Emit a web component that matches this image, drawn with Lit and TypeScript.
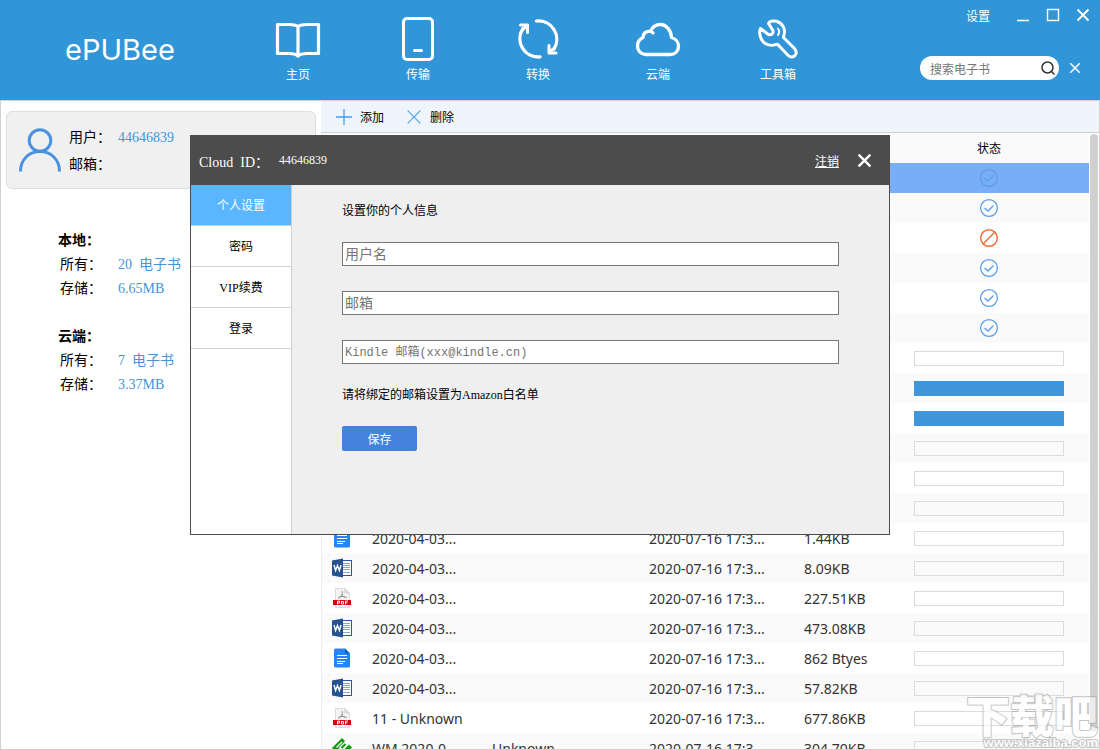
import { LitElement, html, css, svg, nothing } from "lit";
import { customElement, property, state } from "lit/decorators.js";
import { classMap } from "lit/directives/class-map.js";

type FileKind = "doc" | "word" | "pdf" | "green" | "";
type Status = "done" | "blocked" | "empty" | "full";

interface Row {
  kind: FileKind;
  name: string;
  author?: string;
  date: string;
  size: string;
  status: Status;
}

const blank = (status: Status): Row => ({ kind: "", name: "", date: "", size: "", status });
const book = (kind: FileKind, name: string, size: string, author = ""): Row => ({
  kind,
  name,
  author,
  date: "2020-07-16 17:3...",
  size,
  status: "empty",
});

const ROWS: Row[] = [
  blank("done"),
  blank("done"),
  blank("blocked"),
  blank("done"),
  blank("done"),
  blank("done"),
  blank("empty"),
  blank("full"),
  blank("full"),
  blank("empty"),
  blank("empty"),
  blank("empty"),
  book("doc", "2020-04-03...", "1.44KB"),
  book("word", "2020-04-03...", "8.09KB"),
  book("pdf", "2020-04-03...", "227.51KB"),
  book("word", "2020-04-03...", "473.08KB"),
  book("doc", "2020-04-03...", "862 Btyes"),
  book("word", "2020-04-03...", "57.82KB"),
  book("pdf", "11 - Unknown", "677.86KB"),
  book("green", "WM 2020-0...", "304.70KB", "Unknown"),
];

const NAV_ICONS = {
  home: svg`<path d="M23 9.500C20 7.500 17 7.500 14 7.500H2.500V36.500H14C18 36.500 21 37 23 39C25 37 28 36.500 32 36.500H43.500V7.500H32C29 7.500 26 7.500 23 9.500V38" stroke-width="3.200"/>`,
  transfer: svg`<rect x="8.500" y="1.500" width="29" height="41" rx="3.500" stroke-width="3"/><path d="M19.500 33.500h7" stroke-width="3"/>`,
  convert: svg`<path d="M21.500 4.100A18.300 18.300 0 0 1 39 32M25 39.900A18.300 18.300 0 0 1 8 11.500" stroke-width="3.300"/><path d="M5.500 8H12.500V15.500M41 36H34V28.500M34 36L38 32M12.500 8L8.500 12" stroke-width="3"/>`,
  cloud: svg`<path d="M10.500 37.500H35.500C40.500 37.500 43.500 33.500 43.500 29.500C43.500 25 40.500 21.500 36.500 20.500C36 13 31 7.500 25.500 7.500C21 7.500 17.500 9.500 15.500 14.500C11 13.500 8 16.500 8 20.500C4.500 22 2.500 25.500 2.500 29C2.500 33.500 6 37.500 10.500 37.500ZM15.500 14.500C16.500 14.700 17.300 15.100 18 15.800" stroke-width="3.300"/>`,
  tools: svg`<path d="M5.500 11.500L13.500 17.500C16.500 18.500 18.800 16.200 17.800 13.200L13.500 6.500C14 4.500 18 3.300 21.500 4.300C27.500 6 31 12 28.800 18.500L28.500 20.500L39.500 31.500C42 34.500 41.500 37.500 39.500 39C37.500 40.500 35 40.200 33 38.200L22.500 27.200C15.500 29.700 9.500 27.500 6.500 22.500C4.500 19 4.200 14 5.500 11.500Z" stroke-width="3"/><path d="M23 11.500C24.500 13.500 24.500 16 23 18" stroke-width="2"/>`,
};

const NAV: { id: keyof typeof NAV_ICONS; label: string }[] = [
  { id: "home", label: "主页" },
  { id: "transfer", label: "传输" },
  { id: "convert", label: "转换" },
  { id: "cloud", label: "云端" },
  { id: "tools", label: "工具箱" },
];

const FILE_ICONS = {
  doc: html`<svg width="20" height="20" viewBox="0 0 20 20" aria-hidden="true">
    <path d="M3.500 0.500H13L18 5.500V18a1.500 1.500 0 0 1-1.500 1.500h-13A1.500 1.500 0 0 1 2 18V2A1.500 1.500 0 0 1 3.500 .5Z" fill="#2484fc"/>
    <path d="M13 .5L18 5.500H13Z" fill="#0d5fc4"/>
    <path d="M5 7.500h10M5 10.500h10M5 13.500h8M5 15.500h6" stroke="#fff" stroke-width="1.200"/>
  </svg>`,
  word: html`<svg width="20" height="20" viewBox="0 0 20 20" aria-hidden="true">
    <rect x="9" y="2.500" width="10.500" height="15" fill="#fff" stroke="#2b579a"/>
    <path d="M11 5.500h7M11 7.500h7M11 9.500h7M11 11.500h7M11 14.500h7" stroke="#8ba5cb"/>
    <path d="M0 2.500L11 .5V19.500L0 17.500Z" fill="#26528f"/>
    <path d="M2 7L3.600 12.500L5.500 7.500L7.400 12.500L9 7" fill="none" stroke="#fff" stroke-width="1.400"/>
  </svg>`,
  pdf: html`<svg width="20" height="20" viewBox="0 0 20 20" aria-hidden="true">
    <path d="M3.500 .5H13L17.500 5V19.500H3.500Z" fill="#f4f4f4" stroke="#dcdcdc"/>
    <path d="M13 .5V5H17.500" fill="#ddd" stroke="#cfcfcf"/>
    <path d="M10.200 3C11 6 9 8.500 6 10.300M10 6.500C11 8.500 12.500 9.500 15 9.500M7 9.300C9 8.500 11 8.300 13 8.600" fill="none" stroke="#888" stroke-width=".9"/>
    <rect x="1" y="12" width="18" height="5" fill="#cc0a0a"/>
    <path d="M5.500 16.500V13H7.500V15H5.500M9.500 13V16H11.500V13.500H9.500M13.500 16.500V13H16M13.500 14.800H15.500" fill="none" stroke="#fff" stroke-width=".9"/>
  </svg>`,
  green: html`<svg width="20" height="20" viewBox="0 0 20 20" aria-hidden="true">
    <path d="M0 10L10 0L13 3L6.500 10L10 13.500L17 6.500L20 9.500L10 20Z" fill="#0a9a0a"/>
    <path d="M4.500 9.500L10 4" stroke="#fff" stroke-width="1.200"/>
    <path d="M9.500 10L13.500 6" stroke="#0a9a0a" stroke-width="2"/>
  </svg>`,
};

const cross = (size: number, width: number) => html`<svg
  width=${size}
  height=${size}
  viewBox="0 0 14 14"
  fill="none"
  stroke="currentColor"
  stroke-width=${width}
  aria-hidden="true"
>
  <path d="M1.500 1.500L12.500 12.500M12.500 1.500L1.500 12.500" />
</svg>`;

const shared = css`
  * {
    box-sizing: border-box;
  }
  button {
    border: 0;
    padding: 0;
    background: none;
    color: inherit;
    font: inherit;
    cursor: pointer;
  }
  input {
    font-family: inherit;
    outline: none;
  }
  svg {
    display: block;
    flex: none;
  }
`;

@customElement("app-header")
class AppHeader extends LitElement {
  static styles = [
    shared,
    css`
      :host {
        display: flex;
        flex: none;
        height: 100px;
        background: #3096d8;
        color: #fff;
        font-size: 12px;
      }
      .logo {
        width: 238px;
        padding-left: 65px;
        font: 29px/100px Inter, "Liberation Sans", sans-serif;
      }
      .nav {
        display: flex;
      }
      .nav button {
        width: 120px;
        padding: 17px 0;
        display: flex;
        flex-direction: column;
        align-items: center;
        gap: 3px;
        line-height: 16px;
      }
      .side {
        flex: 1;
        display: flex;
        flex-direction: column;
        align-items: flex-end;
      }
      .window {
        display: flex;
        align-items: center;
        gap: 16px;
        height: 30px;
        padding-right: 10px;
      }
      .settings {
        padding-right: 10px;
      }
      .search {
        display: flex;
        align-items: center;
        gap: 10px;
        padding: 26px 19px 0 0;
      }
      .box {
        display: flex;
        align-items: center;
        width: 139px;
        height: 24px;
        padding: 0 4px 0 10px;
        border-radius: 12px;
        background: #fff;
        color: #333;
      }
      .box input {
        flex: 1;
        min-width: 0;
        border: 0;
        padding: 0;
        font-size: 12px;
        background: none;
      }
      .box input::placeholder {
        color: #757575;
      }
    `,
  ];

  render() {
    return html`
      <div class="logo">ePUBee</div>
      <nav class="nav">
        ${NAV.map(
          (item) => html`<button type="button">
            <svg width="46" height="46" viewBox="0 0 46 46" fill="none" stroke="#fff" stroke-linecap="round" stroke-linejoin="round" aria-hidden="true">
              ${NAV_ICONS[item.id]}
            </svg>
            <span>${item.label}</span>
          </button>`
        )}
      </nav>
      <div class="side">
        <div class="window">
          <button type="button" class="settings">设置</button>
          <button type="button" aria-label="最小化">
            <svg width="14" height="14" viewBox="0 0 14 14"><path d="M1 12.500h12" stroke="#fff" stroke-width="1.500" /></svg>
          </button>
          <button type="button" aria-label="最大化">
            <svg width="14" height="14" viewBox="0 0 14 14"><rect x="1.500" y="1.500" width="11" height="11" fill="none" stroke="#fff" stroke-width="1.400" /></svg>
          </button>
          <button type="button" aria-label="关闭">${cross(14, 1.8)}</button>
        </div>
        <div class="search">
          <div class="box">
            <input type="text" aria-label="搜索电子书" placeholder="搜索电子书" />
            <button type="button" aria-label="搜索">
              <svg width="14" height="14" viewBox="0 0 14 14" fill="none" stroke="#333" stroke-width="1.500">
                <circle cx="6.500" cy="6.500" r="5.500" />
                <path d="M10.500 10.500L13.500 13.500" />
              </svg>
            </button>
          </div>
          <button type="button" aria-label="清除">${cross(12, 1.8)}</button>
        </div>
      </div>
    `;
  }
}

@customElement("account-sidebar")
class AccountSidebar extends LitElement {
  static styles = [
    shared,
    css`
      :host {
        display: block;
        width: 320px;
        flex: none;
        background: #fff;
        font-family: "Liberation Serif", "Noto Sans CJK SC", serif;
        font-size: 14px;
      }
      .card {
        display: flex;
        align-items: center;
        gap: 8px;
        height: 78px;
        margin: 10px 5px 40px;
        padding: 0 12px;
        background: #f0f0f0;
        border: 1px solid #dedede;
        border-radius: 6px;
      }
      .card dl {
        padding-top: 2px;
      }
      dl,
      dd,
      h2 {
        margin: 0;
      }
      .line {
        display: flex;
        line-height: 27px;
      }
      .line dt {
        width: 49px;
      }
      dd {
        display: flex;
        gap: 7px;
        color: #4495d8;
      }
      .group {
        padding: 0 0 24px 57px;
        line-height: 24px;
      }
      h2 {
        font-size: 14px;
        font-weight: 700;
      }
      .group .line {
        line-height: 24px;
        padding-left: 2px;
      }
      .group dt {
        width: 58px;
      }
    `,
  ];

  private group(title: string, count: string, storage: string) {
    return html`<section class="group">
      <h2>${title}</h2>
      <dl>
        <div class="line"><dt>所有：</dt><dd><span>${count}</span><span>电子书</span></dd></div>
        <div class="line"><dt>存储：</dt><dd>${storage}</dd></div>
      </dl>
    </section>`;
  }

  render() {
    return html`
      <div class="card">
        <svg width="42" height="44" viewBox="0 0 42 44" fill="none" stroke="#4a92e0" stroke-width="3" aria-hidden="true">
          <circle cx="21" cy="12.500" r="10.800" />
          <path d="M1.500 43.500C1.500 31.500 10 23.500 21 23.500C32 23.500 40.500 31.500 40.500 43.500" />
        </svg>
        <dl>
          <div class="line"><dt>用户：</dt><dd>44646839</dd></div>
          <div class="line"><dt>邮箱：</dt><dd></dd></div>
        </dl>
      </div>
      ${this.group("本地：", "20", "6.65MB")} ${this.group("云端：", "7", "3.37MB")}
    `;
  }
}

@customElement("book-list")
class BookList extends LitElement {
  @state() private selected = 0;

  static styles = [
    shared,
    css`
      :host {
        display: flex;
        flex-direction: column;
        flex: 1;
        min-width: 0;
        min-height: 0;
      }
      .toolbar {
        display: flex;
        flex: none;
        align-items: center;
        gap: 22px;
        height: 32px;
        padding-left: 15px;
        background: #eef5fd;
        border-bottom: 1px solid #d0d0d0;
        font-size: 12px;
      }
      .toolbar button {
        display: flex;
        align-items: center;
        gap: 8px;
      }
      .toolbar svg {
        color: #4a9ff0;
      }
      .list {
        display: flex;
        flex: 1;
        min-height: 0;
      }
      .view {
        flex: 1;
        min-width: 0;
        overflow: hidden;
        border-left: 1px solid #eee;
      }
      .track {
        width: 10px;
        padding: 1px 1px 18px;
      }
      .thumb {
        height: 100%;
        border-radius: 4px;
        background: #d0d0d0;
      }
      table {
        width: 100%;
        table-layout: fixed;
        border-collapse: collapse;
        font: 14px/20px "Noto Sans", "Noto Sans CJK SC", sans-serif;
        color: #333;
      }
      .c-icon {
        width: 35px;
      }
      .c-name {
        width: 120px;
      }
      .c-author {
        width: 157px;
      }
      .c-date {
        width: 155px;
      }
      .c-size {
        width: 100px;
      }
      tr {
        height: 30px;
      }
      tbody tr:nth-child(even),
      thead tr {
        background: #fafafa;
      }
      tbody tr.selected {
        background: #78aef7;
      }
      th {
        padding: 2px 0 0;
        font-size: 12px;
        font-weight: 400;
        color: #000;
      }
      td {
        padding: 2px 0 0 15px;
        white-space: nowrap;
      }
      td.icon {
        padding: 0 0 0 10px;
      }
      td.status {
        padding: 0;
      }
      .status svg {
        margin: 0 auto;
      }
      .bar {
        width: 75%;
        height: 15px;
        margin: 0 auto;
        border: 1px solid #dcdcdc;
      }
      .bar.full {
        background: #4096da;
        border-color: #4096da;
      }
    `,
  ];

  private status(row: Row) {
    if (row.status === "done")
      return html`<svg width="20" height="20" viewBox="0 0 20 20" fill="none" stroke="#5c9de6" stroke-width="1.300" role="img" aria-label="完成">
        <circle cx="10" cy="10" r="8.400" />
        <path d="M5.500 10L9 13L14.500 7.500" />
      </svg>`;
    if (row.status === "blocked")
      return html`<svg width="20" height="20" viewBox="0 0 20 20" fill="none" stroke="#ee6f3a" stroke-width="1.500" role="img" aria-label="失败">
        <circle cx="10" cy="10" r="8.300" />
        <path d="M4.300 15.700L15.700 4.300" />
      </svg>`;
    const full = row.status === "full";
    return html`<div class=${classMap({ bar: true, full })} role="progressbar" aria-valuenow=${full ? 100 : 0}></div>`;
  }

  render() {
    return html`
      <div class="toolbar">
        <button type="button">
          <svg width="16" height="16" viewBox="0 0 16 16" stroke="currentColor" stroke-width="1.300"><path d="M8 0V16M0 8H16" /></svg>
          添加
        </button>
        <button type="button">${cross(16, 1)}删除</button>
      </div>
      <div class="list">
        <div class="view">
          <table>
            <colgroup>
              <col class="c-icon" /><col class="c-name" /><col class="c-author" /><col class="c-date" /><col class="c-size" /><col />
            </colgroup>
            <thead>
              <tr><th colspan="5"></th><th scope="col">状态</th></tr>
            </thead>
            <tbody>
              ${ROWS.map(
                (row, i) => html`<tr class=${classMap({ selected: i === this.selected })} @click=${() => (this.selected = i)}>
                  <td class="icon">${row.kind ? FILE_ICONS[row.kind] : nothing}</td>
                  <td>${row.name}</td>
                  <td>${row.author}</td>
                  <td>${row.date}</td>
                  <td>${row.size}</td>
                  <td class="status">${this.status(row)}</td>
                </tr>`
              )}
            </tbody>
          </table>
        </div>
        <div class="track"><div class="thumb"></div></div>
      </div>
    `;
  }
}

@customElement("settings-dialog")
class SettingsDialog extends LitElement {
  @property() account = "";
  @state() private tab = 0;

  static styles = [
    shared,
    css`
      :host {
        display: flex;
        flex-direction: column;
        width: 700px;
        height: 400px;
        border: 1px solid #4c4c4c;
        background: #efefef;
        font-size: 12px;
      }
      .title {
        display: flex;
        align-items: center;
        flex: none;
        height: 49px;
        padding: 0 17px 0 8px;
        background: #4c4c4c;
        color: #fff;
        font-family: "Liberation Serif", "Noto Sans CJK SC", serif;
      }
      .id {
        display: flex;
        align-items: baseline;
        gap: 7px;
        width: 80px;
        font-size: 14px;
      }
      .account {
        flex: 1;
      }
      .title a {
        margin-right: 18px;
        color: #fff;
      }
      .body {
        display: flex;
        flex: 1;
        min-height: 0;
      }
      .tabs {
        width: 101px;
        flex: none;
        background: #fff;
        border-right: 1px solid #d0d0d0;
      }
      .tabs button {
        display: block;
        width: 100%;
        height: 41px;
        border-bottom: 1px solid #d0d0d0;
        font-family: "Liberation Serif", "Noto Sans CJK SC", serif;
      }
      .tabs .active {
        background: #5ab6ff;
        color: #fff;
      }
      .form {
        flex: 1;
        display: flex;
        flex-direction: column;
        align-items: flex-start;
        gap: 25px;
        padding: 20px 50px;
        font-family: "Liberation Serif", "Noto Sans CJK SC", serif;
      }
      .form p {
        margin: 0;
        line-height: 12px;
      }
      .form input {
        width: 100%;
        height: 24px;
        padding: 2px 2px 0;
        border: 1px solid #767676;
        background: #fff;
        font-size: 14px;
      }
      .form .mono {
        font-family: "Liberation Mono", "Noto Sans CJK SC", monospace;
        font-size: 12px;
      }
      .form input::placeholder {
        color: #757575;
      }
      .save {
        width: 75px;
        height: 25px;
        border-radius: 2px;
        background: #4383dd;
        color: #fff;
      }
    `,
  ];

  render() {
    const tabs = ["个人设置", "密码", "VIP续费", "登录"];
    return html`
      <header class="title">
        <span class="id"><span>Cloud</span><span>ID：</span></span>
        <span class="account">${this.account}</span>
        <a href="#logout">注销</a>
        <button type="button" aria-label="关闭">${cross(15, 2.2)}</button>
      </header>
      <div class="body">
        <nav class="tabs">
          ${tabs.map(
            (label, i) => html`<button type="button" class=${classMap({ active: i === this.tab })} @click=${() => (this.tab = i)}>${label}</button>`
          )}
        </nav>
        <form class="form">
          <p>设置你的个人信息</p>
          <input type="text" aria-label="用户名" placeholder="用户名" />
          <input type="email" aria-label="邮箱" placeholder="邮箱" />
          <input class="mono" type="email" aria-label="Kindle 邮箱" placeholder="Kindle 邮箱(xxx@kindle.cn)" />
          <p>请将绑定的邮箱设置为Amazon白名单</p>
          <button type="button" class="save">保存</button>
        </form>
      </div>
    `;
  }
}

@customElement("app-root")
class AppRoot extends LitElement {
  static styles = [
    shared,
    css`
      :host {
        display: flex;
        flex-direction: column;
        position: relative;
        height: 100vh;
        overflow: hidden;
        background: #fff;
        color: #000;
        font-family: "Noto Sans CJK SC", sans-serif;
      }
      .workspace {
        display: flex;
        flex: 1;
        min-height: 0;
        border: 1px solid #d0d0d0;
      }
      .dialog {
        position: absolute;
        left: 190px;
        top: 135px;
      }
      .mark {
        position: absolute;
        right: 2px;
        bottom: 0;
        text-align: right;
        pointer-events: none;
        opacity: 0.6;
        color: #fff;
        -webkit-text-stroke: 2px #a0a0a0;
        paint-order: stroke fill;
      }
      .mark-name {
        font-size: 44px;
        font-weight: 900;
        line-height: 44px;
      }
      .mark-url {
        font: 700 13px/14px "Liberation Sans", sans-serif;
      }
    `,
  ];

  render() {
    return html`
      <app-header></app-header>
      <main class="workspace">
        <account-sidebar></account-sidebar>
        <book-list></book-list>
      </main>
      <settings-dialog class="dialog" role="dialog" account="44646839"></settings-dialog>
      <div class="mark">
        <div class="mark-name">下载吧</div>
        <div class="mark-url">www.xiazaiba.com</div>
      </div>
    `;
  }
}
